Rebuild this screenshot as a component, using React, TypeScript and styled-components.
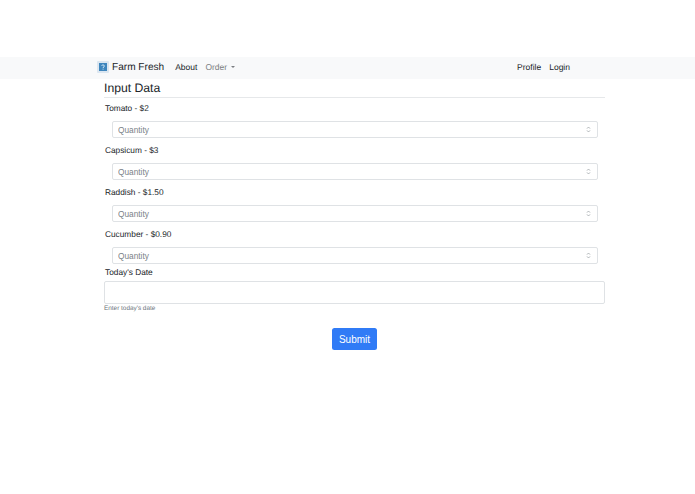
import React from "react";
import styled, { createGlobalStyle } from "styled-components";

const GlobalStyle = createGlobalStyle`
  html, body {
    margin: 0;
    padding: 0;
    background: #fff;
    color: #212529;
    font-family: "Liberation Sans", Arial, sans-serif;
    text-rendering: geometricPrecision;
  }
`;

const Page = styled.div`
  padding-top: 57px;
  height: 437px;
`;

const Navbar = styled.nav`
  display: flex;
  align-items: center;
  height: 22px;
  padding: 0 117px 2px 97px;
  box-sizing: border-box;
  background: #f8f9fa;
  font-size: 8.5px;
`;

const Brand = styled.a`
  display: flex;
  align-items: center;
  gap: 3px;
  font-size: 10.1px;
  color: #212529;
  margin-right: 11px;
`;

const Logo = styled.svg`
  width: 12px;
  height: 12px;
  display: block;
`;

const NavLink = styled.a<{ $muted?: boolean }>`
  color: ${(props) => (props.$muted ? "#7b7e82" : "#212529")};
  margin-right: 8px;
  display: flex;
  align-items: center;
`;

const Caret = styled.span`
  width: 0;
  height: 0;
  margin-left: 4px;
  border-top: 2.5px solid #7b7e82;
  border-left: 2.5px solid transparent;
  border-right: 2.5px solid transparent;
`;

const NavSpacer = styled.div`
  flex: 1;
`;

const Content = styled.main`
  width: 501px;
  margin-left: 104px;
`;

const Title = styled.h1`
  margin: 0;
  height: 17px;
  padding-top: 1px;
  font-size: 12.2px;
  line-height: 16px;
  font-weight: 400;
  color: #212529;
  border-bottom: 1px solid #e6e8ea;
`;

const FieldLabel = styled.label`
  display: block;
  margin-left: 1px;
  height: 10px;
  font-size: 8.3px;
  line-height: 10px;
  color: #212529;
`;

const ProductList = styled.div`
  display: flex;
  flex-direction: column;
  gap: 7px;
  padding-top: 5px;
`;

const Product = styled.div`
  display: flex;
  flex-direction: column;
  gap: 8px;
`;

const QuantityWrap = styled.div`
  position: relative;
  margin: 0 7px 0 8px;
`;

const QuantityInput = styled.input`
  display: block;
  box-sizing: border-box;
  width: 100%;
  height: 17px;
  padding: 0 5px;
  font: 8.3px "Liberation Sans", Arial, sans-serif;
  color: #495057;
  background: #fff;
  border: 1px solid #dfe2e5;
  border-radius: 2px;
  outline: none;

  &::placeholder {
    color: #7b8288;
    opacity: 1;
  }
`;

const Spinner = styled.svg`
  position: absolute;
  top: 5px;
  right: 7px;
  width: 5px;
  height: 7px;
`;

const DateBlock = styled.div`
  margin-top: 3px;
`;

const DateInput = styled.input`
  display: block;
  box-sizing: border-box;
  width: 100%;
  height: 23px;
  margin-top: 4px;
  background: #fff;
  border: 1px solid #dfe2e5;
  border-radius: 2px;
  outline: none;
`;

const HelpText = styled.small`
  display: block;
  margin-top: 1px;
  font-size: 6.4px;
  line-height: 8px;
  color: #6c757d;
`;

const Actions = styled.div`
  display: flex;
  justify-content: center;
  padding-top: 15px;
`;

const SubmitButton = styled.button`
  width: 45px;
  height: 22px;
  padding: 0;
  font: 10px "Liberation Sans", Arial, sans-serif;
  color: #fff;
  background: #307bf6;
  border: 0;
  border-radius: 2.5px;
`;

const products = ["Tomato - $2", "Capsicum - $3", "Raddish - $1.50", "Cucumber - $0.90"];

export default function App() {
  return (
    <Page>
      <GlobalStyle />
      <Navbar>
        <Brand>
          <Logo viewBox="0 0 12 12">
            <rect width="12" height="12" rx="1" fill="#dbe6f0" />
            <rect x="2" y="2" width="8" height="8" fill="#3f86bd" />
            <path d="M4.6 4.7c.2-1.1 2.8-1.1 2.8.3 0 1-1.4 1-1.4 2" fill="none" stroke="#dff0fa" strokeWidth="0.9" />
            <rect x="5.6" y="7.7" width="0.9" height="0.9" fill="#dff0fa" />
          </Logo>
          Farm Fresh
        </Brand>
        <NavLink>About</NavLink>
        <NavLink $muted>
          Order
          <Caret />
        </NavLink>
        <NavSpacer />
        <NavLink>Profile</NavLink>
        <NavLink>Login</NavLink>
      </Navbar>
      <Content>
        <Title>Input Data</Title>
        <ProductList>
          {products.map((name) => (
            <Product key={name}>
              <FieldLabel>{name}</FieldLabel>
              <QuantityWrap>
                <QuantityInput placeholder="Quantity" />
                <Spinner viewBox="0 0 5 7">
                  <path d="M1 2.6 2.5 1 4 2.6M1 4.4 2.5 6 4 4.4" fill="none" stroke="#a0a4a8" strokeWidth="0.8" />
                </Spinner>
              </QuantityWrap>
            </Product>
          ))}
        </ProductList>
        <DateBlock>
          <FieldLabel>Today's Date</FieldLabel>
          <DateInput />
          <HelpText>Enter today's date</HelpText>
        </DateBlock>
        <Actions>
          <SubmitButton>Submit</SubmitButton>
        </Actions>
      </Content>
    </Page>
  );
}
